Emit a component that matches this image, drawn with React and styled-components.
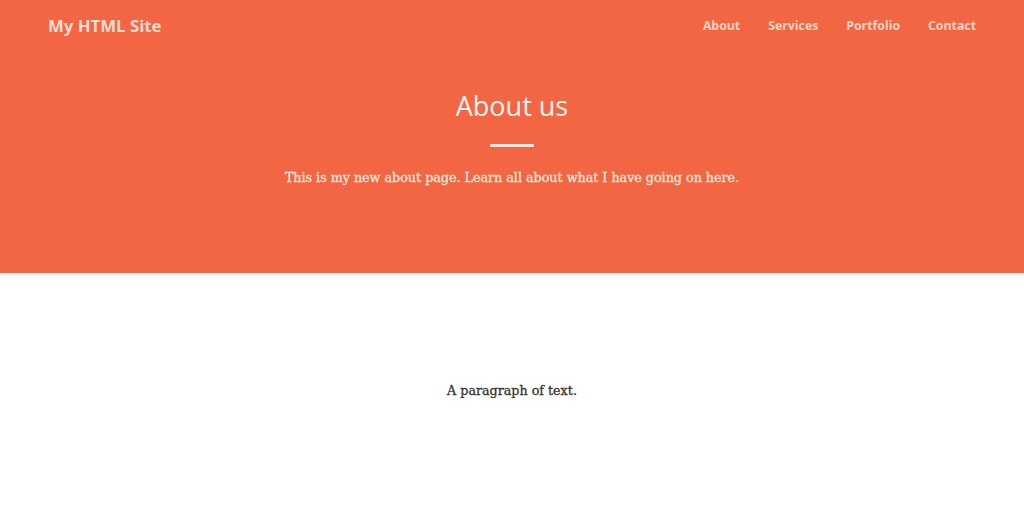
import React from "react";
import styled, { createGlobalStyle } from "styled-components";

const Global = createGlobalStyle`
  html, body { margin: 0; padding: 0; background: #fff; }
  body { font-family: "DejaVu Serif", serif; }
`;

const Hero = styled.header`
  background: #f26644;
  height: 273px;
  display: flex;
  flex-direction: column;
`;

const NavBar = styled.nav`
  display: flex;
  align-items: center;
  justify-content: space-between;
  height: 50px;
  padding: 0 48px 0 48px;
`;

const Brand = styled.div`
  font-family: "Open Sans", sans-serif;
  font-weight: 700;
  font-size: 16.8px;
  color: #fcdcd0;
`;

const Links = styled.ul`
  display: flex;
  gap: 28px;
  list-style: none;
  margin: 0;
  padding: 0;
`;

const Link = styled.li`
  font-family: "Open Sans", sans-serif;
  font-weight: 700;
  font-size: 12.3px;
  color: #fcd4c4;
`;

const HeroBody = styled.div`
  display: flex;
  flex-direction: column;
  align-items: center;
  padding-top: 38px;
`;

const Title = styled.h1`
  margin: 0;
  font-family: "Open Sans", sans-serif;
  font-weight: 500;
  font-size: 27px;
  line-height: 36px;
  color: #fff4ee;
`;

const Rule = styled.div`
  width: 44px;
  height: 3px;
  background: #fde6dc;
  margin-top: 20px;
`;

const Lead = styled.p`
  margin: 23px 0 0;
  font-family: "DejaVu Serif", serif;
  font-size: 12.7px;
  color: #fde8df;
  -webkit-text-stroke: 0.3px currentColor;
`;

const Main = styled.main`
  display: flex;
  justify-content: center;
  padding-top: 110px;
`;

const Para = styled.p`
  margin: 0;
  font-family: "DejaVu Serif", serif;
  font-size: 12.7px;
  color: #333;
  -webkit-text-stroke: 0.3px currentColor;
`;

export default function App() {
  return (
    <>
      <Global />
      <Hero>
        <NavBar>
          <Brand>My HTML Site</Brand>
          <Links>
            <Link>About</Link>
            <Link>Services</Link>
            <Link>Portfolio</Link>
            <Link>Contact</Link>
          </Links>
        </NavBar>
        <HeroBody>
          <Title>About us</Title>
          <Rule />
          <Lead>This is my new about page. Learn all about what I have going on here.</Lead>
        </HeroBody>
      </Hero>
      <Main>
        <Para>A paragraph of text.</Para>
      </Main>
    </>
  );
}
